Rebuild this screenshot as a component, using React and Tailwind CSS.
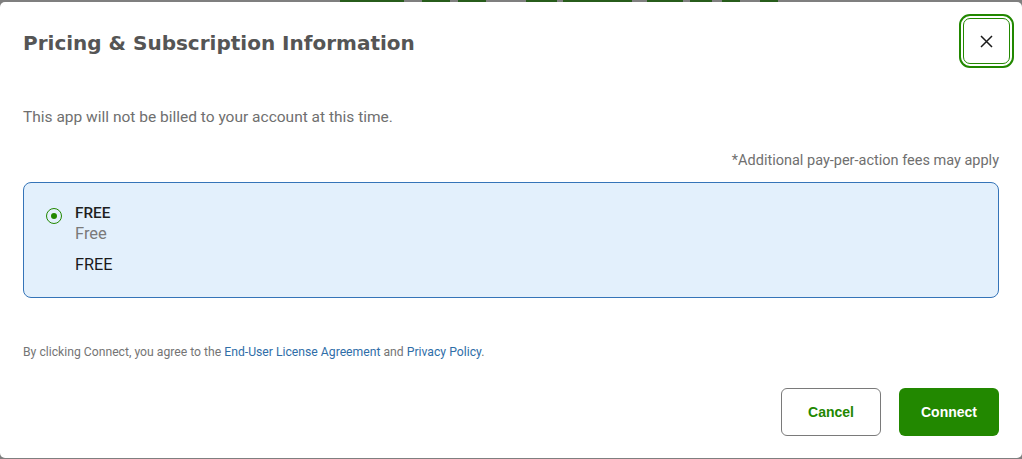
import React from "react";

const strip = [
  ["gray", 340], ["green", 64], ["gray", 18], ["green", 28], ["gray", 8], ["green", 28],
  ["gray", 40], ["green", 31], ["gray", 6], ["green", 69], ["gray", 15], ["green", 36],
  ["gray", 7], ["green", 22], ["gray", 10], ["green", 18], ["gray", 20], ["green", 18],
];

const App = () => {
  return (
    <div className="h-screen w-full bg-[#7f7f7f] flex flex-col overflow-hidden font-['Roboto',sans-serif]">
      <div className="h-[2px] flex shrink-0">
        {strip.map(([c, w], i) => (
          <div
            key={i}
            className={c === "green" ? "h-full bg-[#275c1b]" : "h-full"}
            style={{ width: w }}
          />
        ))}
      </div>

      <div className="bg-white rounded-[5px] h-[456px] flex flex-col">
        {/* header */}
        <div className="flex items-start justify-between pl-[23px] pr-[12px] pt-[16px]">
          <h2 className="mt-[11px] text-[20px] leading-[28px] font-bold text-[#555555] font-['DejaVu_Sans',sans-serif]">
            Pricing &amp; Subscription Information
          </h2>
          <button className="w-[47px] h-[46px] rounded-[7px] border border-[#228800] outline-2 outline-offset-2 outline-[#228800] flex items-center justify-center">
            <svg width="13" height="13" viewBox="0 0 13 13" fill="none">
              <path d="M1 1L12 12M12 1L1 12" stroke="#1a1a1a" strokeWidth="1.5" />
            </svg>
          </button>
        </div>

        <div className="px-[23px] flex flex-col">
          <p className="mt-[42px] text-[15.5px] leading-[22px] text-[#6f6f6f]">
            This app will not be billed to your account at this time.
          </p>
          <p className="mt-[23px] text-[14.5px] leading-[20px] text-[#6f6f6f] text-right">
            *Additional pay-per-action fees may apply
          </p>

          <div className="mt-[11px] h-[116px] rounded-[8px] border border-[#3574b8] bg-[#e3f0fc] pl-[22px] pt-[19px] flex gap-[13px]">
            <div className="mt-[6px] w-[16px] h-[16px] rounded-full border-[1.5px] border-[#228800] flex items-center justify-center shrink-0">
              <div className="w-[6px] h-[6px] rounded-full bg-[#228800]" />
            </div>
            <div className="flex flex-col">
              <span className="text-[15.3px] leading-[22px] font-medium text-[#1f1f1f]">FREE</span>
              <span className="text-[16.5px] leading-[20px] text-[#7a7a7a]">Free</span>
              <span className="mt-[10px] text-[16.3px] leading-[22px] text-[#1a1a1a]">FREE</span>
            </div>
          </div>

          <p className="mt-[45px] text-[12.2px] leading-[18px] text-[#757575]">
            By clicking Connect, you agree to the{" "}
            <a className="text-[#2f6ea8]">End-User License Agreement</a> and{" "}
            <a className="text-[#2f6ea8]">Privacy Policy</a>.
          </p>

          <div className="mt-[27px] flex justify-end gap-[18px] font-['Liberation_Sans',sans-serif]">
            <button className="w-[100px] h-[48px] rounded-[6px] border border-[#7a7a7a] bg-white text-[#228800] text-[14px] font-bold">
              Cancel
            </button>
            <button className="w-[100px] h-[48px] rounded-[6px] bg-[#228800] text-white text-[14px] font-bold">
              Connect
            </button>
          </div>
        </div>
      </div>
    </div>
  );
};

export default App;
